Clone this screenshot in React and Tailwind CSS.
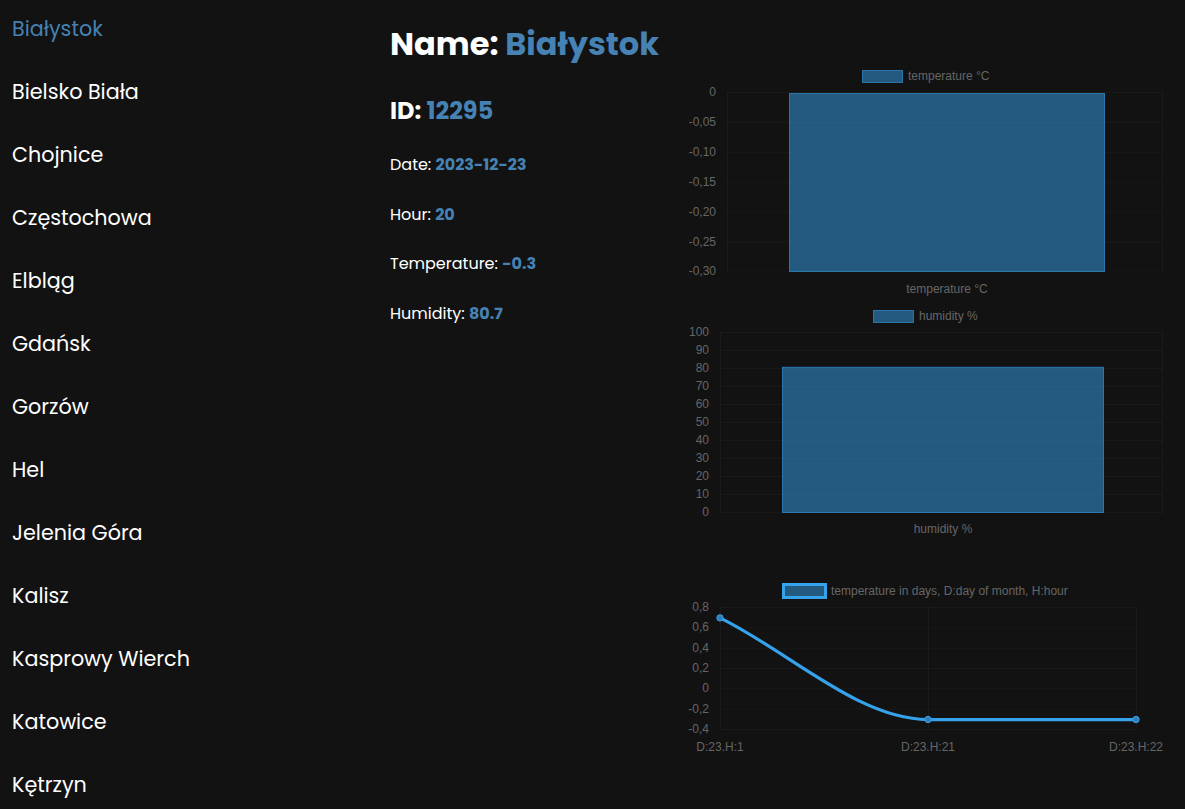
import { useState } from "react";

const cities = [
  "Białystok",
  "Bielsko Biała",
  "Chojnice",
  "Częstochowa",
  "Elbląg",
  "Gdańsk",
  "Gorzów",
  "Hel",
  "Jelenia Góra",
  "Kalisz",
  "Kasprowy Wierch",
  "Katowice",
  "Kętrzyn",
];

const station = {
  id: 12295,
  name: "Białystok",
  date: "2023-12-23",
  hour: 20,
  temperature: -0.3,
  humidity: 80.7,
};

const GRID = "rgba(255,255,255,0.03)";
const LABEL = "#666666";
const BAR_FILL = "rgba(54,162,235,0.5)";
const BAR_STROKE = "rgba(54,162,235,0.6)";
const chartFont = { fontFamily: '"Liberation Sans", Arial, sans-serif', fontSize: 12 };

function Legend({ x, y, label, w = 40, h = 12, thick }) {
  return (
    <g style={chartFont}>
      <rect
        x={x + 0.5}
        y={y + 0.5}
        width={w}
        height={h}
        fill={BAR_FILL}
        stroke={thick ? "#36a2eb" : BAR_STROKE}
        strokeWidth={thick ? 3 : 1}
      />
      <text x={x + w + 6} y={y + h / 2 + 4} fill={LABEL}>
        {label}
      </text>
    </g>
  );
}

function TemperatureBar() {
  const ticks = ["0", "-0,05", "-0,10", "-0,15", "-0,20", "-0,25", "-0,30"];
  const yAt = (i) => 30 + i * 29.9;
  return (
    <svg width="475" height="240" className="block overflow-visible">
      <Legend x={172} y={8} label="temperature °C" />
      {ticks.map((t, i) => (
        <g key={t} style={chartFont}>
          <line x1="37" x2="473" y1={yAt(i) + 0.5} y2={yAt(i) + 0.5} stroke={GRID} />
          <text x="26" y={yAt(i) + 4} textAnchor="end" fill={LABEL}>
            {t}
          </text>
        </g>
      ))}
      <line x1="37.5" x2="37.5" y1="30" y2="210" stroke={GRID} />
      <line x1="472.5" x2="472.5" y1="30" y2="210" stroke={GRID} />
      <rect x="99.5" y="31.5" width="315" height="178" fill={BAR_FILL} stroke={BAR_STROKE} />
      <text x="257" y="231" textAnchor="middle" fill={LABEL} style={chartFont}>
        temperature °C
      </text>
    </svg>
  );
}

function HumidityBar() {
  const ticks = [100, 90, 80, 70, 60, 50, 40, 30, 20, 10, 0];
  const yAt = (i) => 30 + i * 18;
  const top = 210 - (station.humidity / 100) * 180;
  return (
    <svg width="475" height="240" className="block overflow-visible">
      <Legend x={183} y={8} label="humidity %" />
      {ticks.map((t, i) => (
        <g key={t} style={chartFont}>
          <line x1="30" x2="473" y1={yAt(i) + 0.5} y2={yAt(i) + 0.5} stroke={GRID} />
          <text x="19" y={yAt(i) + 4} textAnchor="end" fill={LABEL}>
            {t}
          </text>
        </g>
      ))}
      <line x1="30.5" x2="30.5" y1="30" y2="210" stroke={GRID} />
      <line x1="472.5" x2="472.5" y1="30" y2="210" stroke={GRID} />
      <rect x="92.5" y={top + 0.5} width="321" height={210 - top} fill={BAR_FILL} stroke={BAR_STROKE} />
      <text x="253" y="231" textAnchor="middle" fill={LABEL} style={chartFont}>
        humidity %
      </text>
    </svg>
  );
}

function TemperatureLine() {
  const ticks = ["0,8", "0,6", "0,4", "0,2", "0", "-0,2", "-0,4"];
  const yVal = (v) => 35 + ((0.8 - v) / 1.2) * 122;
  const xs = [30, 238, 446];
  const points = [
    { label: "D:23.H:1", v: 0.7 },
    { label: "D:23.H:21", v: -0.3 },
    { label: "D:23.H:22", v: -0.3 },
  ].map((p, i) => ({ ...p, x: xs[i], y: yVal(p.v) + 0.7 }));
  const [a, b, c] = points;
  const d = `M${a.x},${a.y} C${a.x + 69.3},${a.y + 34} ${b.x - 69.3},${b.y} ${b.x},${b.y} L${c.x},${c.y}`;
  return (
    <svg width="475" height="190" className="block overflow-visible">
      <Legend x={93} y={12} w={42} h={13} label="temperature in days, D:day of month, H:hour" thick />
      {ticks.map((t, i) => {
        const y = 35 + i * (122 / 6);
        return (
          <g key={t} style={chartFont}>
            <line x1="30" x2="446" y1={y + 0.5} y2={y + 0.5} stroke={GRID} />
            <text x="19" y={y + 4} textAnchor="end" fill={LABEL}>
              {t}
            </text>
          </g>
        );
      })}
      {xs.map((x) => (
        <line key={x} x1={x + 0.5} x2={x + 0.5} y1="35" y2="157" stroke={GRID} />
      ))}
      <path d={d} fill="none" stroke="#36a2eb" strokeWidth="3.2" />
      {points.map((p) => (
        <g key={p.label}>
          <circle cx={p.x} cy={p.y} r="3.2" fill="#2f7fb8" stroke="#36a2eb" strokeWidth="1" />
          <text x={p.x} y={179} textAnchor="middle" fill={LABEL} style={chartFont}>
            {p.label}
          </text>
        </g>
      ))}
    </svg>
  );
}

export default function App() {
  const [selected, setSelected] = useState("Białystok");

  return (
    <div
      className="flex h-[809px] overflow-hidden bg-[#121212] text-white"
      style={{ fontFamily: 'Poppins, Inter, "Noto Sans", sans-serif' }}
    >
      <ul className="flex w-[390px] shrink-0 flex-col gap-[33px] pl-3 pt-[14px]">
        {cities.map((city) => (
          <li
            key={city}
            onClick={() => setSelected(city)}
            className={`cursor-pointer text-[20.7px] leading-[30px] ${
              city === selected ? "text-[#4682b4]" : "text-white"
            }`}
          >
            {city}
          </li>
        ))}
      </ul>

      <section className="flex w-[300px] shrink-0 flex-col pt-5">
        <h1 className="text-[32px] font-bold leading-[48px]">
          Name: <span className="text-[#4682b4]">{station.name}</span>
        </h1>
        <h2 className="mt-[25px] text-[24px] font-bold leading-9">
          ID: <span className="text-[#4682b4]">{station.id}</span>
        </h2>
        <div className="mt-[24px] flex flex-col gap-[25.5px] text-[16px] font-normal leading-6">
          <p>
            Date: <span className="font-bold text-[#4682b4]">{station.date}</span>
          </p>
          <p>
            Hour: <span className="font-bold text-[#4682b4]">{station.hour}</span>
          </p>
          <p>
            Temperature: <span className="font-bold text-[#4682b4]">{station.temperature}</span>
          </p>
          <p>
            Humidity: <span className="font-bold text-[#4682b4]">{station.humidity}</span>
          </p>
        </div>
      </section>

      <section className="flex w-[475px] shrink-0 flex-col pt-[62px]">
        <TemperatureBar />
        <HumidityBar />
        <div className="mt-[30px]">
          <TemperatureLine />
        </div>
      </section>
    </div>
  );
}
